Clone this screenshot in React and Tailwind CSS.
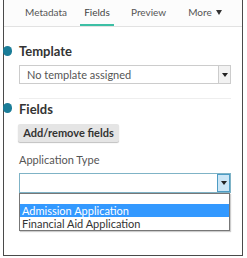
export default function App() {
  return (
    <div className="w-[247px] h-[258px] bg-white overflow-hidden" style={{ fontFamily: 'Lato, "Open Sans", sans-serif' }}>
      <div className="ml-[3px] w-[240px] h-[256px] border-l border-r border-b border-[#4a4a4a] relative">
        <div className="h-[27px] flex items-end border-b border-[#e2e2e2] bg-[#fcfcfc] text-[10px] text-[#555]">
          <div className="ml-[21px] w-[55px] pb-[6px]">Metadata</div>
          <div className="w-[34px] text-center pb-[4px] border-b-2 border-[#3dbfa5] text-[#444]">Fields</div>
          <div className="ml-[17px] pb-[6px]">Preview</div>
          <div className="ml-[22px] pb-[6px] flex items-center gap-[4px]">
            More
            <span className="w-0 h-0 border-l-[3.5px] border-r-[3.5px] border-t-[5px] border-l-transparent border-r-transparent border-t-[#333]" />
          </div>
        </div>

        <div className="pl-[15px] pr-[10px]">
          <div className="relative mt-[16px] h-[18px] flex items-center">
            <span className="absolute left-[-16px] top-[3px] w-[9px] h-[10px] rounded-full bg-[#1b7d98]" />
            <span className="text-[13px] font-bold text-[#333]">Template</span>
          </div>
          <div className="mt-[4px] h-[19px] w-[212px] border border-[#ccc] flex bg-white">
            <div className="flex-1 pl-[7px] text-[11px] leading-[17px] text-[#555]">No template assigned</div>
            <div className="w-[12px] border-l border-[#ccc] bg-[#f2f2f2] flex items-center justify-center">
              <span className="w-0 h-0 border-l-[3px] border-r-[3px] border-t-[4px] border-l-transparent border-r-transparent border-t-[#222]" />
            </div>
          </div>
          <div className="mt-[14px] w-[212px] border-t border-[#eee]" />

          <div className="relative mt-[2px] h-[18px] flex items-center">
            <span className="absolute left-[-16px] top-[2px] w-[9px] h-[10px] rounded-full bg-[#1b7d98]" />
            <span className="text-[13px] font-bold text-[#333]">Fields</span>
          </div>
          <button className="mt-[3px] ml-[-1px] h-[18px] w-[101px] bg-[#e5e5e5] shadow-[0_1px_1px_rgba(0,0,0,0.25)] rounded-[2px] text-[11px] font-bold text-[#333] leading-[18px]">
            Add/remove fields
          </button>

          <div className="mt-[10px] text-[11px] text-[#555] leading-[14px]">Application Type</div>
          <div className="mt-[6px] h-[20px] w-[212px] border border-[#7fb3c6] flex bg-white">
            <div className="flex-1" />
            <div className="w-[13px] border border-[#4e9cc4] bg-[#cce6f6] flex items-center justify-center">
              <span className="w-0 h-0 border-l-[3px] border-r-[3px] border-t-[4px] border-l-transparent border-r-transparent border-t-[#222]" />
            </div>
          </div>
          <div className="w-[211px] border border-[#777] bg-white text-[11px] leading-[13px] shadow-[1px_1px_1px_rgba(0,0,0,0.2)]">
            <div className="h-[10px]" />
            <div className="bg-[#3399ff] text-white pl-[2px] h-[13px]">Admission Application</div>
            <div className="text-[#333] pl-[2px] h-[13px]">Financial Aid Application</div>
          </div>
        </div>
      </div>
    </div>
  );
}
